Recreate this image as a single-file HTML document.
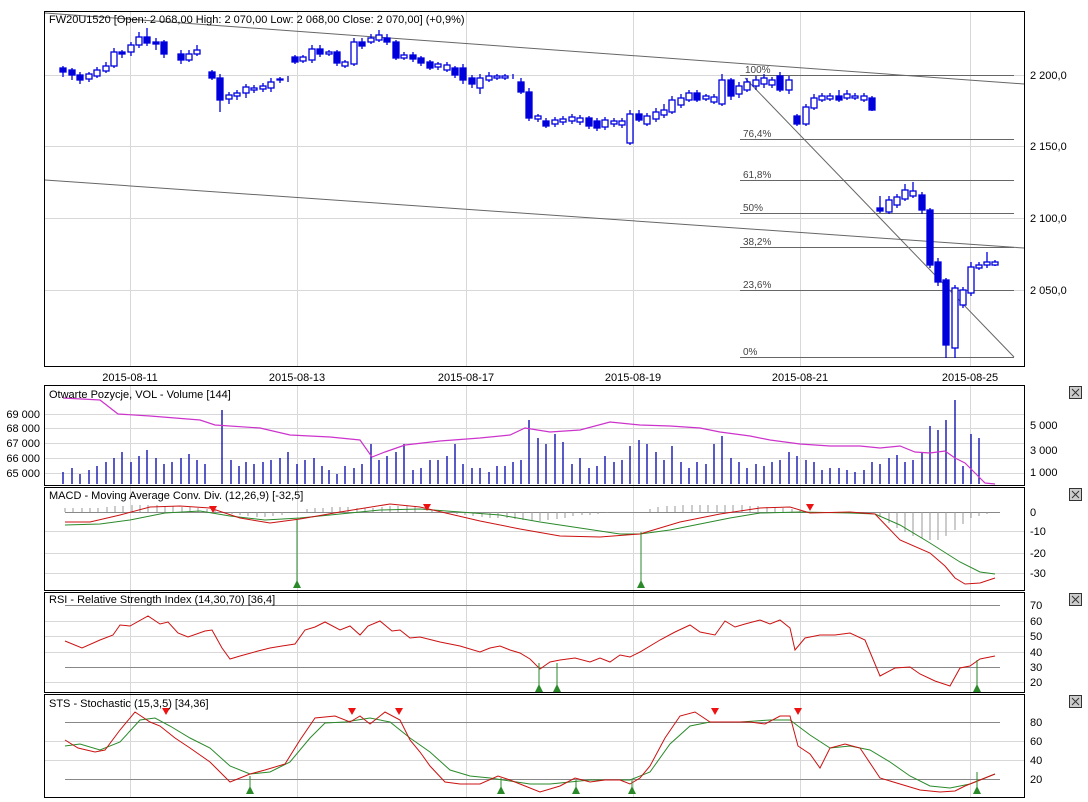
<!DOCTYPE html><html><head><meta charset="utf-8"><style>body{margin:0;background:#fff}svg{display:block;font-family:"Liberation Sans",sans-serif;font-size:11px}</style></head><body>
<svg width="1088" height="802" viewBox="0 0 1088 802">
<g stroke="#d8d8d8" stroke-width="1">
<line x1="45" y1="75.5" x2="1024" y2="75.5"/><line x1="45" y1="146.5" x2="1024" y2="146.5"/><line x1="45" y1="218.5" x2="1024" y2="218.5"/><line x1="45" y1="290.5" x2="1024" y2="290.5"/>
<g id="vg"><line x1="130.5" y1="12" x2="130.5" y2="366"/><line x1="297.5" y1="12" x2="297.5" y2="366"/><line x1="466.5" y1="12" x2="466.5" y2="366"/><line x1="633.5" y1="12" x2="633.5" y2="366"/><line x1="800.5" y1="12" x2="800.5" y2="366"/><line x1="970.5" y1="12" x2="970.5" y2="366"/></g>
<g><line x1="130.5" y1="385" x2="130.5" y2="797"/><line x1="297.5" y1="385" x2="297.5" y2="797"/><line x1="466.5" y1="385" x2="466.5" y2="797"/><line x1="633.5" y1="385" x2="633.5" y2="797"/><line x1="800.5" y1="385" x2="800.5" y2="797"/><line x1="970.5" y1="385" x2="970.5" y2="797"/></g>
<line x1="45" y1="414.5" x2="1024" y2="414.5"/><line x1="45" y1="428.5" x2="1024" y2="428.5"/><line x1="45" y1="443.5" x2="1024" y2="443.5"/><line x1="45" y1="458.5" x2="1024" y2="458.5"/><line x1="45" y1="473.5" x2="1024" y2="473.5"/>
<line x1="45" y1="531.5" x2="1024" y2="531.5"/><line x1="45" y1="553.5" x2="1024" y2="553.5"/><line x1="45" y1="573.5" x2="1024" y2="573.5"/>
<line x1="45" y1="621.5" x2="1024" y2="621.5"/><line x1="45" y1="636.5" x2="1024" y2="636.5"/><line x1="45" y1="652.5" x2="1024" y2="652.5"/><line x1="45" y1="682.5" x2="1024" y2="682.5"/>
<line x1="45" y1="741.5" x2="1024" y2="741.5"/><line x1="45" y1="760.5" x2="1024" y2="760.5"/>
</g>
<g stroke="#888"><line x1="65" y1="512.5" x2="1000" y2="512.5"/><line x1="65" y1="605.5" x2="1000" y2="605.5"/><line x1="65" y1="667.5" x2="1000" y2="667.5"/><line x1="65" y1="722.5" x2="1000" y2="722.5"/><line x1="65" y1="779.5" x2="1000" y2="779.5"/></g>
<!-- trend / fib -->
<g stroke="#666" fill="none">
<line x1="45" y1="13" x2="1024" y2="84"/><line x1="45" y1="180" x2="1024" y2="248"/><line x1="745" y1="78" x2="1014" y2="357"/>
<line x1="740" y1="75.5" x2="1014" y2="75.5"/><line x1="740" y1="139.5" x2="1014" y2="139.5"/><line x1="740" y1="180.5" x2="1014" y2="180.5"/><line x1="740" y1="213.5" x2="1014" y2="213.5"/><line x1="740" y1="247.5" x2="1014" y2="247.5"/><line x1="740" y1="290.5" x2="1014" y2="290.5"/><line x1="740" y1="357.5" x2="1014" y2="357.5"/>
</g>
<g fill="#444" font-size="10"><text x="745" y="73">100%</text><text x="743" y="137">76,4%</text><text x="743" y="178">61,8%</text><text x="743" y="211">50%</text><text x="743" y="245">38,2%</text><text x="743" y="288">23,6%</text><text x="743" y="355">0%</text></g>
<!-- candles -->
<g stroke="#0000dd" stroke-width="1.3" fill="#0000dd" id="c">
<path d="M63 66V77M72 68V80M80 72V84M89 72V82M97 67V78M106 62V73M114 48V68M122 50V58M131 42V56M139 32V48M147 28V46M156 38V50M164 40V58M181 50V64M189 50V62M197 45V56M212 70V80M220 74V112M229 92V104M237 90V100M246 84V98M254 85V93M263 83V92M271 78V92M280 77V83M288 76V82M295 55V64M303 55V63M312 45V63M320 45V57M329 50V56M337 50V66M345 60V68M354 38V66M362 38V49M371 34V44M379 30V42M387 34V45M396 40V60M404 52V60M413 52V62M421 56V66M430 60V70M438 62V70M447 62V72M455 66V78M463 64V84M472 75V88M480 74V94M489 72V82M497 74V80M505 74V80M513 74V79M521 78V94M529 88V121M538 114V122M546 118V128M555 117V127M563 116V125M572 114V124M580 115V125M589 116V129M597 118V131M605 117V130M614 118V127M622 118V128M630 110V145M639 110V122M647 113V126M656 108V122M664 104V118M672 96V114M681 94V108M689 90V102M697 90V102M706 94V101M714 94V104M722 74V106M731 78V100M739 82V98M747 78V92M756 76V90M764 74V88M772 77V88M780 72V92M789 76V94M797 114V126M806 104V126M814 94V110M822 93V102M830 93V101M839 90V102M847 90V100M855 93V100M864 93V102M872 96V111M880 196V213M889 196V214M897 194V208M905 184V201M913 182V198M922 192V214M930 208V268M938 258V286M946 278V358M955 285V358M963 287V308M971 262V296M979 262V270M987 252V268M995 260V266"/>
<rect x="60" y="68" width="6" height="4"/><rect x="69" y="70" width="6" height="5"/><rect x="77" y="75" width="6" height="5"/><rect x="119" y="52" width="6" height="2"/><rect x="144" y="37" width="6" height="6"/><rect x="153" y="42" width="6" height="2"/><rect x="161" y="42" width="6" height="12"/><rect x="178" y="54" width="6" height="6"/>
<rect x="209" y="72" width="6" height="6"/><rect x="217" y="78" width="6" height="22"/><rect x="292" y="57" width="6" height="5"/><rect x="317" y="49" width="6" height="5"/><rect x="334" y="52" width="6" height="11"/><rect x="359" y="42" width="6" height="4"/><rect x="384" y="38" width="6" height="4"/><rect x="393" y="42" width="6" height="16"/><rect x="410" y="55" width="6" height="4"/><rect x="418" y="58" width="6" height="5"/><rect x="427" y="62" width="6" height="6"/><rect x="452" y="68" width="6" height="7"/><rect x="460" y="68" width="6" height="12"/><rect x="469" y="78" width="6" height="6"/><rect x="518" y="82" width="6" height="10"/><rect x="526" y="92" width="6" height="26"/><rect x="543" y="121" width="6" height="5"/><rect x="586" y="118" width="6" height="8"/><rect x="594" y="121" width="6" height="7"/><rect x="636" y="114" width="6" height="6"/><rect x="694" y="93" width="6" height="7"/><rect x="728" y="80" width="6" height="16"/><rect x="777" y="76" width="6" height="14"/><rect x="794" y="116" width="6" height="8"/><rect x="836" y="96" width="6" height="4"/><rect x="869" y="98" width="6" height="12"/><rect x="877" y="208" width="6" height="3"/><rect x="919" y="195" width="6" height="15"/><rect x="927" y="210" width="6" height="55"/><rect x="935" y="262" width="6" height="20"/><rect x="943" y="280" width="6" height="65"/>
<g fill="#fff">
<rect x="86" y="74" width="6" height="5"/><rect x="94" y="70" width="6" height="6"/><rect x="103" y="66" width="6" height="5"/><rect x="111" y="52" width="6" height="14"/><rect x="128" y="45" width="6" height="7"/><rect x="136" y="37" width="6" height="8"/><rect x="186" y="54" width="6" height="6"/><rect x="194" y="50" width="6" height="4"/><rect x="226" y="95" width="6" height="4"/><rect x="234" y="93" width="6" height="3"/><rect x="243" y="87" width="6" height="6"/><rect x="251" y="88" width="6" height="2"/><rect x="260" y="86" width="6" height="3"/><rect x="268" y="82" width="6" height="6"/><rect x="277" y="79" width="6" height="1"/><rect x="300" y="57" width="6" height="4"/><rect x="309" y="49" width="6" height="11"/><rect x="326" y="52" width="6" height="2"/><rect x="342" y="62" width="6" height="4"/><rect x="351" y="42" width="6" height="22"/><rect x="368" y="38" width="6" height="4"/><rect x="376" y="35" width="6" height="5"/><rect x="401" y="55" width="6" height="3"/><rect x="435" y="64" width="6" height="3"/><rect x="444" y="65" width="6" height="5"/><rect x="477" y="78" width="6" height="10"/><rect x="486" y="76" width="6" height="4"/><rect x="494" y="76" width="6" height="2"/><rect x="502" y="76" width="6" height="2"/><rect x="535" y="116" width="6" height="3"/><rect x="552" y="120" width="6" height="4"/><rect x="560" y="119" width="6" height="3"/><rect x="569" y="117" width="6" height="4"/><rect x="577" y="118" width="6" height="4"/><rect x="602" y="120" width="6" height="7"/><rect x="611" y="121" width="6" height="3"/><rect x="619" y="121" width="6" height="4"/><rect x="627" y="114" width="6" height="29"/><rect x="644" y="116" width="6" height="8"/><rect x="653" y="112" width="6" height="7"/><rect x="661" y="110" width="6" height="5"/><rect x="669" y="100" width="6" height="12"/><rect x="678" y="98" width="6" height="7"/><rect x="686" y="93" width="6" height="7"/><rect x="703" y="96" width="6" height="3"/><rect x="711" y="97" width="6" height="5"/><rect x="719" y="80" width="6" height="24"/><rect x="736" y="86" width="6" height="8"/><rect x="744" y="82" width="6" height="8"/><rect x="753" y="80" width="6" height="6"/><rect x="761" y="78" width="6" height="6"/><rect x="769" y="80" width="6" height="5"/><rect x="786" y="80" width="6" height="10"/><rect x="803" y="107" width="6" height="17"/><rect x="811" y="98" width="6" height="10"/><rect x="819" y="96" width="6" height="4"/><rect x="827" y="96" width="6" height="3"/><rect x="844" y="94" width="6" height="4"/><rect x="852" y="96" width="6" height="2"/><rect x="861" y="96" width="6" height="4"/><rect x="886" y="200" width="6" height="12"/><rect x="894" y="197" width="6" height="8"/><rect x="902" y="190" width="6" height="9"/><rect x="910" y="191" width="6" height="5"/><rect x="952" y="288" width="6" height="60"/><rect x="960" y="290" width="6" height="15"/><rect x="968" y="267" width="6" height="26"/><rect x="976" y="265" width="6" height="3"/><rect x="984" y="262" width="6" height="3"/><rect x="992" y="262" width="6" height="3"/>
</g></g>
<!-- volume bars -->
<g stroke="#0000aa" stroke-width="1.3">
<path d="M63 484V472M72 484V468M80 484V474M89 484V470M97 484V466M106 484V462M114 484V458M122 484V452M131 484V462M139 484V456M147 484V450M156 484V458M164 484V464M172 484V462M181 484V458M189 484V454M197 484V460M205 484V464M222 484V410M231 484V460M239 484V466M246 484V462M254 484V464M263 484V462M271 484V460M280 484V458M288 484V452M297 484V464M305 484V460M314 484V458M322 484V466M329 484V470M337 484V474M345 484V466M354 484V468M362 484V464M371 484V444M379 484V460M387 484V456M396 484V452M404 484V444M413 484V470M421 484V468M430 484V460M438 484V460M447 484V456M455 484V444M463 484V464M472 484V468M480 484V468M489 484V472M497 484V466M505 484V466M513 484V462M521 484V460M529 484V420M538 484V438M546 484V444M555 484V434M563 484V442M572 484V464M580 484V458M589 484V468M597 484V466M605 484V456M614 484V462M622 484V460M630 484V446M639 484V440M647 484V444M656 484V452M664 484V460M672 484V446M681 484V462M689 484V468M697 484V462M706 484V464M714 484V444M722 484V436M731 484V458M739 484V462M747 484V468M756 484V464M764 484V466M772 484V462M780 484V460M789 484V452M797 484V456M806 484V460M814 484V462M822 484V470M830 484V468M839 484V468M847 484V470M855 484V472M864 484V470M872 484V462M880 484V464M889 484V458M897 484V455M905 484V462M913 484V460M922 484V452M930 484V426M938 484V430M946 484V420M955 484V400M963 484V466M971 484V434M979 484V438"/>
</g>
<polyline fill="none" stroke="#cc33cc" stroke-width="1.2" points="63,398 100,400 118,414 150,416 200,420 215,425 260,428 290,435 330,437 360,440 372,457 385,452 405,445 440,441 480,438 510,435 525,428 550,432 580,430 610,422 640,425 670,426 700,428 720,432 750,436 770,440 800,444 830,446 860,446 880,448 900,446 915,452 930,453 945,451 955,458 965,463 975,473 985,483 995,484"/>
<!-- MACD -->
<g stroke="#999"><path d="M65 512V508M73 512V508M82 512V508M90 512V508M98 512V508M107 512V507M115 512V506M123 512V506M132 512V505M140 512V505M148 512V505M157 512V505M165 512V506M173 512V506M182 512V507M190 512V507M198 512V508M207 512V509M215 512V510M232 512V514M240 512V515M248 512V516M257 512V517M265 512V517M273 512V516M282 512V515M307 512V509M315 512V508M323 512V508M332 512V507M340 512V507M348 512V507M357 512V508M365 512V508M373 512V508M382 512V507M390 512V506M398 512V506M407 512V506M415 512V507M432 512V510M440 512V512M457 512V514M465 512V515M473 512V516M482 512V517M490 512V518M498 512V518M507 512V518M515 512V519M523 512V520M532 512V521M540 512V521M548 512V520M557 512V519M565 512V518M573 512V516M582 512V515M590 512V515M598 512V514M607 512V513M650 512V509M658 512V507M667 512V506M675 512V506M683 512V505M692 512V505M700 512V505M708 512V505M717 512V505M725 512V505M733 512V505M742 512V505M750 512V506M758 512V506M767 512V507M775 512V508M783 512V508M792 512V509M800 512V510M880 512V517M889 512V523M897 512V528M905 512V532M913 512V536M922 512V538M930 512V540M938 512V540M946 512V536M955 512V530M963 512V524M971 512V518M979 512V516M987 512V514"/></g>
<polyline fill="none" stroke="#2a8a2a" points="65,525 100,524 130,520 165,513 200,511 230,516 265,520 300,518 340,514 380,510 420,509 460,512 500,515 540,522 580,528 620,534 640,534 670,530 700,524 730,518 760,513 800,512 850,513 875,514 900,525 930,543 960,562 980,572 995,574"/>
<polyline fill="none" stroke="#cc1111" points="65,522 90,522 120,515 150,507 180,506 210,508 240,518 270,523 300,519 340,512 390,504 420,507 450,514 480,521 520,529 560,536 600,537 640,534 680,522 720,514 760,508 790,507 810,513 850,512 875,514 900,540 930,553 945,566 955,578 965,584 980,583 995,578"/>
<path d="M297 520V582M641 532V582" stroke="#2a8a2a"/>
<g fill="#2a8a2a"><polygon points="293,588 301,588 297,580"/><polygon points="637,588 645,588 641,580"/></g>
<g fill="#ee1111"><polygon points="209,506 217,506 213,513"/><polygon points="423,504 431,504 427,511"/><polygon points="806,504 814,504 810,511"/></g>
<!-- RSI -->
<polyline fill="none" stroke="#cc1111" points="65,641 82,648 100,640 113,635 120,625 130,626 148,616 160,624 168,622 178,633 188,637 205,631 212,630 222,648 230,659 240,656 258,651 270,648 282,646 295,644 305,630 315,627 325,622 340,630 350,626 360,635 368,626 380,621 392,631 400,630 410,638 420,637 440,642 460,646 480,652 490,648 500,646 510,650 520,653 530,659 540,669 550,662 560,660 575,658 590,662 600,658 610,662 620,655 630,657 640,652 660,640 675,632 690,625 700,632 715,635 725,621 735,627 745,624 760,620 770,624 780,620 790,628 795,650 805,638 820,635 835,635 850,633 865,640 880,676 895,668 910,667 920,674 935,681 950,686 960,668 970,666 980,659 995,656"/>
<path d="M539 663V688M557 663V688M977 660V688" stroke="#2a8a2a"/>
<g fill="#2a8a2a"><polygon points="535,692 543,692 539,684"/><polygon points="553,692 561,692 557,684"/><polygon points="973,692 981,692 977,684"/></g>
<!-- STS -->
<polyline fill="none" stroke="#2a8a2a" points="65,746 80,744 100,750 120,742 140,720 155,718 170,726 190,738 210,748 230,766 250,774 270,772 290,762 310,738 325,723 345,722 370,718 390,722 410,738 430,752 450,770 470,776 490,778 510,781 530,784 550,784 570,782 590,780 610,780 630,780 650,772 670,744 690,726 710,722 740,722 770,720 790,720 810,735 830,748 850,746 870,750 890,762 910,776 930,786 950,788 970,784 995,774"/>
<polyline fill="none" stroke="#cc1111" points="65,740 78,748 95,752 105,750 120,730 135,712 150,722 160,726 175,738 190,748 210,762 230,782 250,774 265,770 285,764 300,740 315,718 335,716 350,722 360,716 370,724 385,712 400,720 410,740 420,752 430,766 445,782 460,784 480,784 498,776 510,780 520,784 540,792 560,786 575,778 590,782 605,780 620,780 630,784 640,778 650,766 665,738 680,716 695,712 710,722 730,722 750,722 765,724 780,716 790,716 798,746 810,754 820,768 830,748 845,744 860,748 880,778 900,784 920,790 940,792 955,791 965,786 975,782 985,778 995,774"/>
<path d="M250 776V790M501 778V790M576 780V790M632 780V790M977 772V790" stroke="#2a8a2a"/>
<g fill="#2a8a2a"><polygon points="246,794 254,794 250,786"/><polygon points="497,794 505,794 501,786"/><polygon points="572,794 580,794 576,786"/><polygon points="628,794 636,794 632,786"/><polygon points="973,794 981,794 977,786"/></g>
<g fill="#ee1111"><polygon points="162,708 170,708 166,715"/><polygon points="348,708 356,708 352,715"/><polygon points="395,708 403,708 399,715"/><polygon points="711,708 719,708 715,715"/><polygon points="794,708 802,708 798,715"/></g>
<!-- frames -->
<g fill="none" stroke="#000"><rect x="44.5" y="11.5" width="980" height="355"/><rect x="44.5" y="385.5" width="980" height="100"/><rect x="44.5" y="487.5" width="980" height="103"/><rect x="44.5" y="592.5" width="980" height="100"/><rect x="44.5" y="694.5" width="980" height="103"/></g>
<!-- texts -->
<g fill="#000">
<text x="49" y="23">FW20U1520 [Open: 2 068,00  High: 2 070,00  Low: 2 068,00  Close: 2 070,00] (+0,9%)</text>
<text x="49" y="398">Otwarte Pozycje, VOL - Volume [144]</text>
<text x="49" y="499">MACD - Moving Average Conv. Div. (12,26,9) [-32,5]</text>
<text x="49" y="603">RSI - Relative Strength Index (14,30,70) [36,4]</text>
<text x="49" y="707">STS - Stochastic (15,3,5) [34,36]</text>
<g text-anchor="middle"><text x="130" y="381">2015-08-11</text><text x="297" y="381">2015-08-13</text><text x="466" y="381">2015-08-17</text><text x="633" y="381">2015-08-19</text><text x="800" y="381">2015-08-21</text><text x="970" y="381">2015-08-25</text></g>
<g><text x="1030" y="79">2 200,0</text><text x="1030" y="150">2 150,0</text><text x="1030" y="222">2 100,0</text><text x="1030" y="294">2 050,0</text>
<text x="1030" y="429">5 000</text><text x="1030" y="454">3 000</text><text x="1030" y="476">1 000</text>
<text x="1030" y="516">0</text><text x="1030" y="535">-10</text><text x="1030" y="557">-20</text><text x="1030" y="577">-30</text>
<text x="1030" y="609">70</text><text x="1030" y="625">60</text><text x="1030" y="640">50</text><text x="1030" y="656">40</text><text x="1030" y="671">30</text><text x="1030" y="686">20</text>
<text x="1030" y="726">80</text><text x="1030" y="745">60</text><text x="1030" y="764">40</text><text x="1030" y="783">20</text></g>
<g text-anchor="end"><text x="40" y="418">69 000</text><text x="40" y="432">68 000</text><text x="40" y="447">67 000</text><text x="40" y="462">66 000</text><text x="40" y="477">65 000</text></g>
</g>
<g fill="#ccc" stroke="#333"><rect x="1069.5" y="386.5" width="12" height="12"/><rect x="1069.5" y="488.5" width="12" height="12"/><rect x="1069.5" y="593.5" width="12" height="12"/><rect x="1069.5" y="695.5" width="12" height="12"/></g>
<g stroke="#333"><path d="M1072 389l7 7M1079 389l-7 7M1072 491l7 7M1079 491l-7 7M1072 596l7 7M1079 596l-7 7M1072 698l7 7M1079 698l-7 7"/></g>
</svg></body></html>
